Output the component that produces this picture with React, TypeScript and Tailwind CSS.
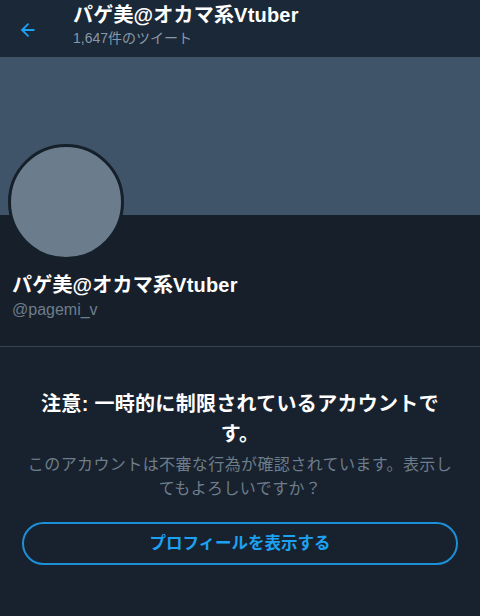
import { ArrowLeft } from 'lucide-react';

const font = { fontFamily: '"Liberation Sans", "Noto Sans CJK JP", sans-serif' };

export default function App() {
  return (
    <div className="w-[480px] h-[616px] bg-[#17202a] flex flex-col overflow-hidden" style={font}>
      {/* Header */}
      <div className="h-[57px] bg-[#1b2838] flex items-center shrink-0">
        <div className="w-[73px] pl-[18px] pt-[2px] flex items-center">
          <ArrowLeft className="w-5 h-5 text-[#1da1f2]" strokeWidth={2.2} />
        </div>
        <div className="flex flex-col -mt-[9px]">
          <span className="text-[20px] font-bold text-white leading-[26px] tracking-[0.2px]">パゲ美@オカマ系Vtuber</span>
          <span className="text-[14px] text-[#8899a6] leading-[18px] mt-[1px]">1,647件のツイート</span>
        </div>
      </div>

      {/* Banner */}
      <div className="h-[158px] bg-[#3f5468] shrink-0"></div>

      {/* Profile */}
      <div className="relative px-3 shrink-0">
        <div className="absolute left-[8px] -top-[71px] w-[116px] h-[116px] rounded-full bg-[#6b7d8c] border-[3px] border-[#15202b]"></div>
        <div className="pt-[57px] flex flex-col">
          <span className="text-[20px] font-bold text-white leading-[26px] tracking-[0.2px]">パゲ美@オカマ系Vtuber</span>
          <span className="text-[16px] text-[#6e7d8a] leading-[22px] mt-[1px]">@pagemi_v</span>
        </div>
      </div>

      <div className="mt-[25px] h-px bg-[#37444f] shrink-0"></div>

      {/* Warning */}
      <div className="flex flex-col items-center px-[22px] pt-[42px] bg-[#18222e] flex-1">
        <h2 className="text-[20px] font-bold text-white leading-[30px] text-center px-[14px] tracking-[0.3px]">
          注意: 一時的に制限されているアカウントです。
        </h2>
        <p className="mt-[4px] text-[16px] text-[#6e7d8a] leading-[24px] text-center px-[2px] tracking-[0.4px]">
          このアカウントは不審な行為が確認されています。表示してもよろしいですか？
        </p>
        <button className="mt-[21px] w-full h-[43px] rounded-full border-2 border-[#1d8fd6] text-[#1da1f2] text-[16.5px] font-bold">
          プロフィールを表示する
        </button>
      </div>
    </div>
  );
}
